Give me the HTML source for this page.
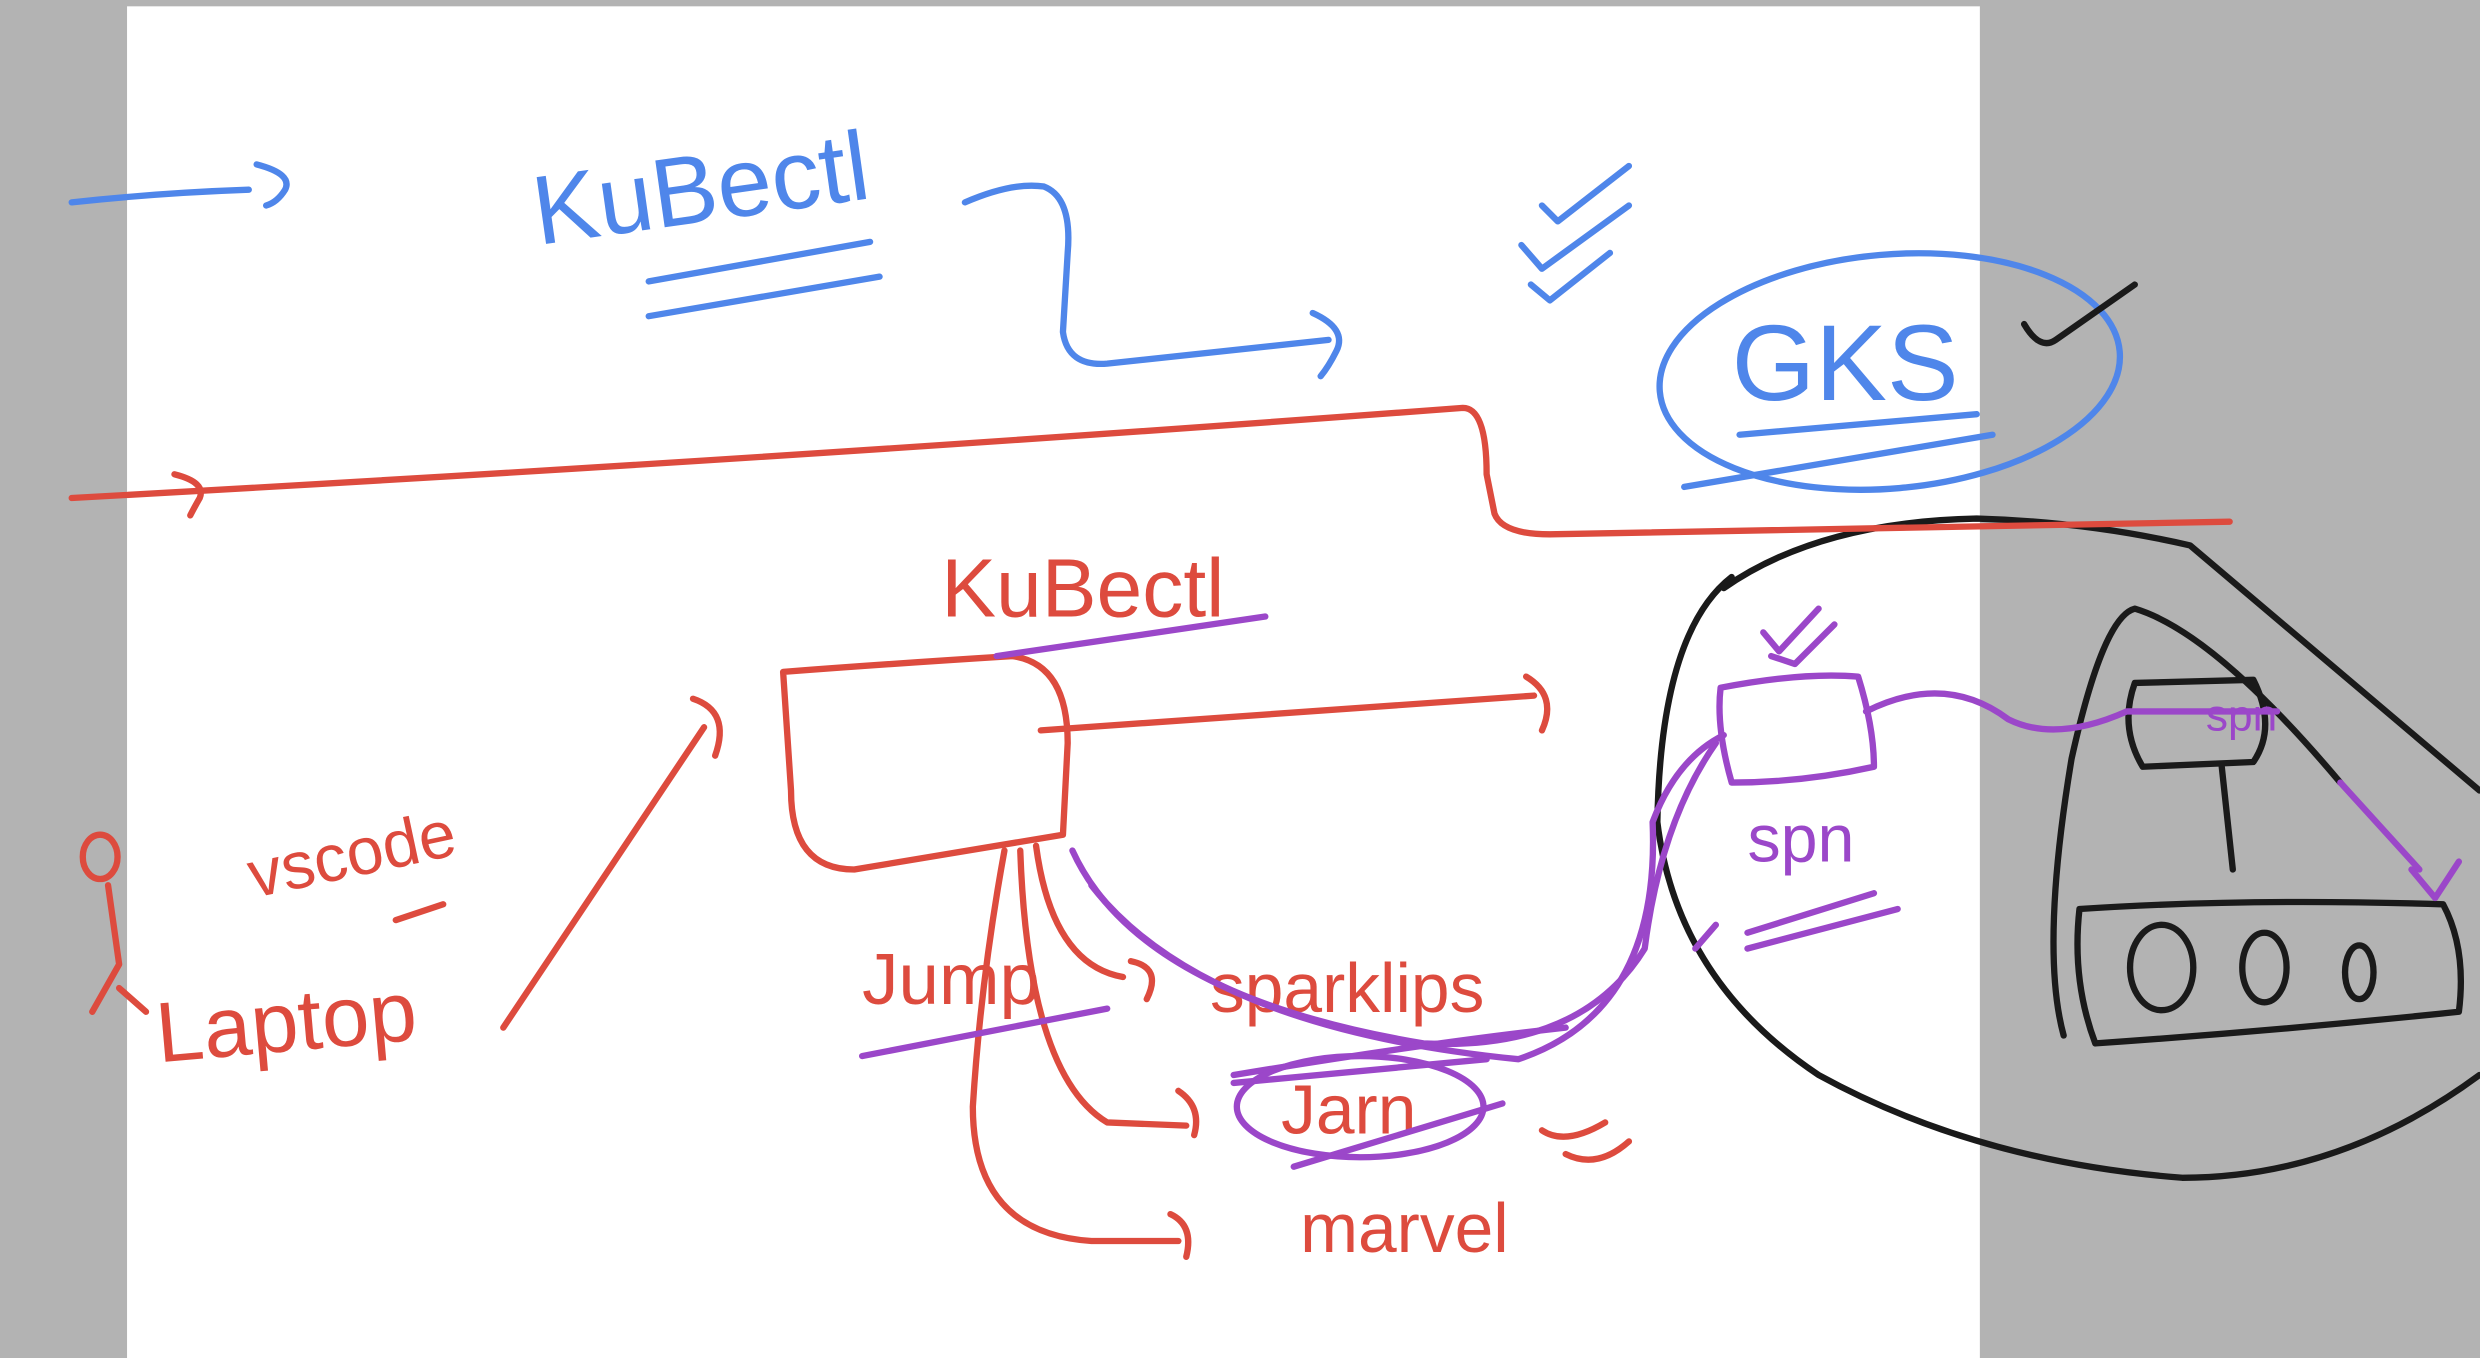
<!DOCTYPE html>
<html><head><meta charset="utf-8"><style>
html,body{margin:0;padding:0;width:2480px;height:1358px;overflow:hidden;background:#b3b3b3}
svg{display:block}
text{font-family:"Liberation Sans",sans-serif}
</style></head><body>
<svg width="2480" height="1358" viewBox="0 0 1568 859" xmlns="http://www.w3.org/2000/svg">
<rect x="0" y="0" width="1568" height="859" fill="#b3b3b3"/>
<rect x="80" y="4" width="1172" height="855" fill="#ffffff"/>
<g fill="none" stroke-linecap="round" stroke-linejoin="round">
<!-- blue -->
<g stroke="#4f86ea" stroke-width="4">
<path d="M45 128 Q100 122 157 120"/>
<path d="M162 104 Q185 110 180 120 Q175 128 168 130"/>
<path d="M410 178 L550 153"/><path d="M410 200 L556 175"/>
<path d="M610 128 Q640 115 660 118 Q678 125 675 160 L672 210 Q675 232 700 230 L840 215"/>
<path d="M830 198 Q852 208 845 222 Q840 232 835 238"/>
<path d="M975 130 L985 140 L1030 105"/><path d="M962 155 L975 170 L1030 130"/><path d="M968 180 L980 190 L1018 160"/>
<ellipse cx="1195" cy="235" rx="146" ry="74" transform="rotate(-5 1195 235)"/>
<path d="M1100 275 L1250 262"/><path d="M1065 308 L1260 275"/>
</g>
<text x="340" y="155" font-size="62" fill="#4f86ea" stroke="none" transform="rotate(-8 340 155)">KuBectl</text>
<text x="1095" y="253" font-size="68" fill="#4f86ea" stroke="none">GKS</text>
<!-- black -->
<g stroke="#1a1a1a" stroke-width="4">
<path d="M1280 205 Q1290 222 1300 215 L1350 180"/>
<path d="M1090 372 Q1150 330 1250 328 Q1320 330 1385 345 L1568 500"/>
<path d="M1095 365 Q1050 400 1048 520 Q1060 620 1150 680 Q1250 735 1380 745 Q1480 745 1568 680"/>
<path d="M1305 655 Q1290 600 1310 480 Q1330 390 1350 385 Q1400 400 1480 495"/>
<path d="M1350 432 L1425 430 Q1440 460 1425 482 L1355 485 Q1340 460 1350 432 Z"/>
<path d="M1405 485 L1412 550"/>
<path d="M1315 575 Q1420 568 1545 572 Q1560 600 1555 640 Q1440 652 1325 660 Q1310 620 1315 575 Z"/>
<ellipse cx="1367" cy="612" rx="20" ry="27"/><ellipse cx="1432" cy="612" rx="14" ry="22"/><ellipse cx="1492" cy="615" rx="9" ry="17"/>
</g>
<!-- red -->
<g stroke="#dd4b3e" stroke-width="4">
<path d="M45 315 Q500 290 925 258 Q940 258 940 300 L945 325 Q950 338 980 338 L1410 330"/>
<path d="M110 300 Q130 305 126 315 Q122 322 120 326"/>
<path d="M495 425 Q560 420 640 415 Q675 420 675 470 L672 528 Q600 540 540 550 Q500 550 500 500 Z"/>
<path d="M658 462 L970 440"/><path d="M965 428 Q985 440 975 462"/>
<path d="M318 650 L445 460"/><path d="M438 442 Q462 450 452 478"/>
<ellipse cx="63" cy="542" rx="11" ry="14"/><path d="M68 560 L75 610 L58 640 M75 625 L92 640"/>
<path d="M250 582 L280 572"/>
<path d="M635 538 Q620 620 615 700 Q615 780 690 785 L745 785"/>
<path d="M645 538 Q650 680 700 710 L750 712"/>
<path d="M655 535 Q665 610 710 618"/>
<path d="M740 768 Q755 775 750 795"/><path d="M745 690 Q760 700 755 718"/><path d="M715 608 Q735 612 725 632"/>
<path d="M975 715 Q990 725 1015 710"/><path d="M990 730 Q1010 740 1030 722"/>
</g>
<text x="595" y="390" font-size="52" fill="#dd4b3e" stroke="none">KuBectl</text>
<text x="100" y="672" font-size="54" fill="#dd4b3e" stroke="none" transform="rotate(-5 100 672)">Laptop</text>
<text x="160" y="568" font-size="42" fill="#dd4b3e" stroke="none" transform="rotate(-12 160 568)">vscode</text>
<text x="545" y="635" font-size="46" fill="#dd4b3e" stroke="none">Jump</text>
<text x="765" y="640" font-size="44" fill="#dd4b3e" stroke="none">sparklips</text>
<text x="810" y="717" font-size="44" fill="#dd4b3e" stroke="none">Jarn</text>
<text x="822" y="792" font-size="44" fill="#dd4b3e" stroke="none">marvel</text>
<!-- purple -->
<g stroke="#9b47c9" stroke-width="4">
<path d="M630 415 L800 390"/>
<path d="M545 668 L700 638"/>
<path d="M678 538 Q720 630 900 660 Q1000 665 1040 600 Q1050 520 1085 470"/>
<path d="M690 560 Q760 650 960 670 Q1050 640 1045 520 Q1060 480 1090 465"/>
<path d="M780 680 Q900 660 990 650"/>
<ellipse cx="860" cy="700" rx="78" ry="32"/>
<path d="M780 685 L940 670"/><path d="M818 738 L950 698"/>
<path d="M1088 435 Q1140 425 1175 428 Q1185 460 1185 485 Q1140 495 1095 495 Q1085 460 1088 435 Z"/>
<path d="M1180 450 Q1230 425 1270 455 Q1300 470 1345 450 L1440 450"/>
<path d="M1480 495 L1530 550"/><path d="M1525 550 L1540 568 L1555 545"/>
<path d="M1115 400 L1125 412 L1150 385"/><path d="M1120 415 L1135 420 L1160 395"/>
<path d="M1105 590 L1185 565"/><path d="M1105 600 L1200 575"/>
<path d="M1072 600 L1085 585"/>
</g>
<text x="1105" y="545" font-size="42" fill="#9b47c9" stroke="none">spn</text>
<text x="1395" y="462" font-size="28" fill="#9b47c9" stroke="none">spn</text>
</g>
</svg>
</body></html>
